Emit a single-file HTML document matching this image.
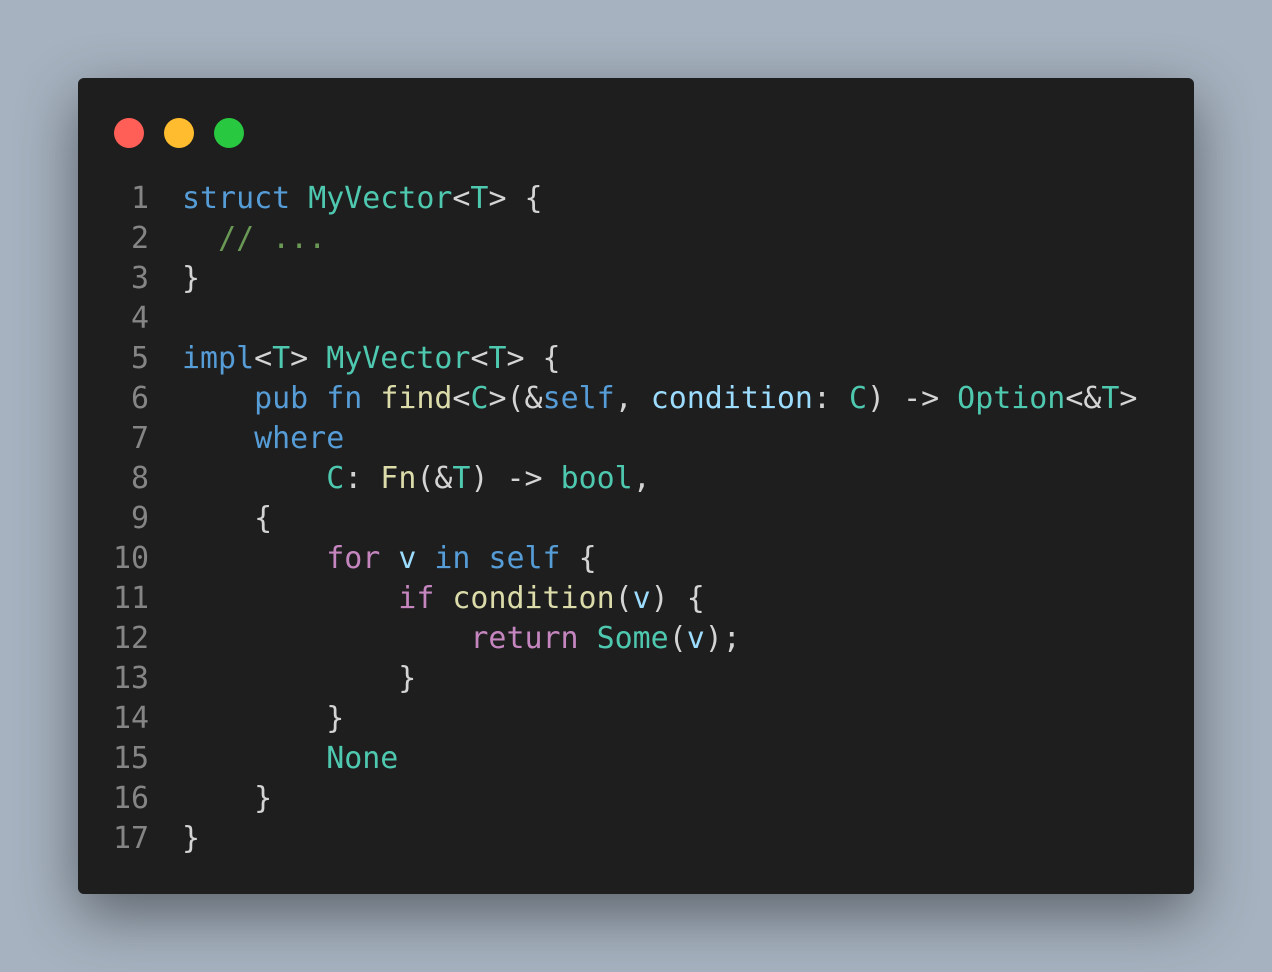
<!DOCTYPE html>
<html><head><meta charset="utf-8"><style>
html,body{margin:0;padding:0;width:1272px;height:972px;background:#a6b2bf;overflow:hidden}
.win{position:absolute;left:78px;top:78px;width:1116px;height:816px;background:#1e1e1e;border-radius:6px;box-shadow:0 20px 60px rgba(0,0,0,0.45)}
.dot{position:absolute;top:40px;width:30px;height:30px;border-radius:50%}
pre{position:absolute;margin:0;top:101px;font-family:"DejaVu Sans Mono","Liberation Mono",monospace;font-size:29.95px;line-height:40px;color:#d4d4d4}
.ln{left:0;width:71px;text-align:right;color:#858585}
.code{left:104px}
.k{color:#569cd6}.t{color:#4ec9b0}.c{color:#6a9955}.f{color:#dcdcaa}.v{color:#9cdcfe}.p{color:#c586c0}
</style></head><body>
<div class="win">
<div class="dot" style="left:36px;background:#ff5f57"></div>
<div class="dot" style="left:86px;background:#febc2e"></div>
<div class="dot" style="left:136px;background:#28c840"></div>
<pre class="ln">1
2
3
4
5
6
7
8
9
10
11
12
13
14
15
16
17</pre>
<pre class="code"><span class="k">struct</span> <span class="t">MyVector</span>&lt;<span class="t">T</span>&gt; {
  <span class="c">// ...</span>
}

<span class="k">impl</span>&lt;<span class="t">T</span>&gt; <span class="t">MyVector</span>&lt;<span class="t">T</span>&gt; {
    <span class="k">pub</span> <span class="k">fn</span> <span class="f">find</span>&lt;<span class="t">C</span>&gt;(&amp;<span class="k">self</span>, <span class="v">condition</span>: <span class="t">C</span>) -&gt; <span class="t">Option</span>&lt;&amp;<span class="t">T</span>&gt;
    <span class="k">where</span>
        <span class="t">C</span>: <span class="f">Fn</span>(&amp;<span class="t">T</span>) -&gt; <span class="t">bool</span>,
    {
        <span class="p">for</span> <span class="v">v</span> <span class="k">in</span> <span class="k">self</span> {
            <span class="p">if</span> <span class="f">condition</span>(<span class="v">v</span>) {
                <span class="p">return</span> <span class="t">Some</span>(<span class="v">v</span>);
            }
        }
        <span class="t">None</span>
    }
}</pre>
</div>
</body></html>
